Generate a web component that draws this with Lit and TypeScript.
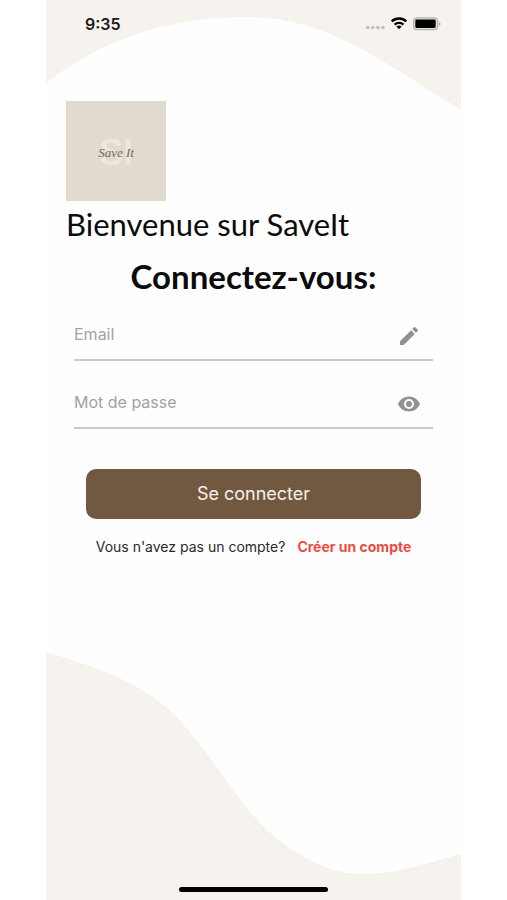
import { LitElement, html, css, svg } from "lit";
import { customElement, state } from "lit/decorators.js";

const pencilIcon = svg`<path d="M3 17.25V21h3.75L17.81 9.94l-3.75-3.75L3 17.25zM20.71 7.04a1 1 0 0 0 0-1.41l-2.34-2.34a1 1 0 0 0-1.41 0l-1.83 1.83 3.75 3.75 1.83-1.83z"/>`;
const eyeIcon = svg`<path d="M12 4.5C7 4.5 2.73 7.61 1 12c1.73 4.39 6 7.5 11 7.5s9.27-3.11 11-7.5c-1.73-4.39-6-7.5-11-7.5zM12 17a5 5 0 1 1 0-10 5 5 0 0 1 0 10zm0-8a3 3 0 1 0 0 6 3 3 0 0 0 0-6z"/>`;

@customElement("status-bar")
export class StatusBar extends LitElement {
  static styles = css`
    :host {
      display: flex;
      align-items: center;
      justify-content: space-between;
      height: 48px;
      padding: 0 20px 0 39px;
      box-sizing: border-box;
    }
    .time {
      font: 600 16px/20px Inter, "Liberation Sans", sans-serif;
      color: #1c1b1a;
    }
  `;

  render() {
    return html`
      <time class="time">9:35</time>
      <svg width="76" height="16" viewBox="0 0 76 16" aria-hidden="true">
        <g fill="#c2bfbc">
          <circle cx="2.7" cy="11.6" r="1.8" /><circle cx="7.8" cy="11.6" r="1.8" />
          <circle cx="12.9" cy="11.6" r="1.8" /><circle cx="18" cy="11.6" r="1.8" />
        </g>
        <g fill="none" stroke="#000" stroke-width="2.4">
          <path d="M26.7 5.4a10.6 10.6 0 0 1 14.6 0" />
          <path d="M29.6 8.6a6.4 6.4 0 0 1 8.8 0" />
        </g>
        <path d="M34 13.2l-2.6-2.6a3.8 3.8 0 0 1 5.2 0z" />
        <rect x="48.6" y="1.9" width="24" height="11.8" rx="3.4" fill="#e6e3df" stroke="#b5b2ae" stroke-width="1.3" />
        <rect x="50.3" y="3.6" width="20.4" height="8.4" rx="1.4" />
        <path d="M74 6.2q1.6.5 1.6 1.8T74 9.8z" fill="#a5a29f" />
      </svg>
    `;
  }
}

@customElement("brand-logo")
export class BrandLogo extends LitElement {
  static styles = css`
    :host {
      display: grid;
      place-items: center;
      width: 100px;
      height: 100px;
      padding-top: 4px;
      box-sizing: border-box;
      background: #e0dacf;
    }
    .initials,
    .name {
      grid-area: 1 / 1;
      white-space: nowrap;
    }
    .initials {
      font: 700 36px/36px "Liberation Sans", sans-serif;
      color: #ebe7dd;
    }
    .name {
      font: italic 400 13px/16px "Liberation Serif", serif;
      color: #6f6862;
    }
  `;

  render() {
    return html`<span class="initials">SI</span><span class="name">Save It</span>`;
  }
}

@customElement("app-root")
export class AppRoot extends LitElement {
  @state() private revealed = false;

  static styles = css`
    :host {
      display: block;
      background: #fff;
      font-family: Inter, "Liberation Sans", sans-serif;
    }
    .screen {
      position: relative;
      display: flex;
      flex-direction: column;
      min-height: 100vh;
      margin: 0 46px;
      background: #fefefe;
      isolation: isolate;
    }
    .wave {
      position: absolute;
      left: 0;
      width: 100%;
      z-index: -1;
      fill: #f6f3ef;
    }
    .wave.top {
      top: 0;
      height: 110px;
    }
    .wave.bottom {
      bottom: 0;
      height: 248px;
    }
    main {
      flex: 1;
      display: flex;
      flex-direction: column;
      padding: 53px 20px 0;
    }
    h1,
    h2 {
      margin: 0;
      font-family: Lato, "Liberation Sans", sans-serif;
      color: #0b0b0b;
    }
    h1 {
      font-size: 31px;
      line-height: 46px;
      font-weight: 400;
    }
    h2 {
      font-size: 33px;
      line-height: 58px;
      font-weight: 700;
      text-align: center;
    }
    form {
      display: flex;
      flex-direction: column;
      padding: 0 8px;
    }
    .field {
      display: flex;
      align-items: center;
      height: 56px;
      margin-bottom: 12px;
      padding: 8px 12px 0 0;
      box-sizing: border-box;
      border-bottom: 2px solid #cbcbcb;
    }
    .field input {
      flex: 1;
      min-width: 0;
      height: 40px;
      padding: 0 0 4px;
      border: 0;
      outline: 0;
      background: none;
      font: 400 16px/20px Inter, "Liberation Sans", sans-serif;
      color: #222;
    }
    .field input::placeholder {
      color: #a2a2a2;
      opacity: 1;
    }
    .icon {
      width: 24px;
      height: 24px;
      fill: #929292;
      display: block;
    }
    .reveal {
      padding: 0;
      border: 0;
      background: none;
      cursor: pointer;
    }
    .submit {
      height: 50px;
      margin: 28px 12px 0;
      border: 0;
      border-radius: 10px;
      background: #705940;
      color: #f9f1e8;
      font: 400 18px/24px Inter, "Liberation Sans", sans-serif;
      cursor: pointer;
    }
    .signup {
      display: flex;
      justify-content: center;
      gap: 12px;
      margin: 18px 0 0;
      font-size: 14px;
      line-height: 20px;
      color: #2a2a2a;
      white-space: nowrap;
    }
    .signup a {
      color: #ee4b3e;
      font-weight: 700;
      text-decoration: none;
    }
    .home {
      align-self: center;
      width: 36%;
      height: 5px;
      margin-bottom: 8px;
      border-radius: 3px;
      background: #000;
    }
  `;

  render() {
    return html`
      <div class="screen">
        <svg class="wave top" viewBox="0 0 415 110" preserveAspectRatio="none" aria-hidden="true">
          <path d="M0 0V83C60 36 130 17 199 17C275 17 320 50 415 110V0z" />
        </svg>
        <svg class="wave bottom" viewBox="0 0 415 248" preserveAspectRatio="none" aria-hidden="true">
          <path d="M0 0C50 15 86 28 115 51C165 92 190 158 237 191C265 212 290 222 317 222C352 222 380 211 415 202V248H0z" />
        </svg>
        <status-bar></status-bar>
        <main>
          <brand-logo></brand-logo>
          <h1>Bienvenue sur SaveIt</h1>
          <h2>Connectez-vous:</h2>
          <form @submit=${(e: Event) => e.preventDefault()}>
            <label class="field">
              <input type="email" name="email" placeholder="Email" aria-label="Email" />
              <svg class="icon" viewBox="0 0 24 24" aria-hidden="true">${pencilIcon}</svg>
            </label>
            <div class="field">
              <input
                type=${this.revealed ? "text" : "password"}
                name="password"
                placeholder="Mot de passe"
                aria-label="Mot de passe"
              />
              <button
                class="reveal"
                type="button"
                aria-label="Afficher le mot de passe"
                @click=${() => (this.revealed = !this.revealed)}
              >
                <svg class="icon" viewBox="0 0 24 24" aria-hidden="true">${eyeIcon}</svg>
              </button>
            </div>
            <button class="submit" type="submit">Se connecter</button>
          </form>
          <p class="signup">
            <span>Vous n'avez pas un compte?</span><a href="#inscription">Créer un compte</a>
          </p>
        </main>
        <div class="home"></div>
      </div>
    `;
  }
}
